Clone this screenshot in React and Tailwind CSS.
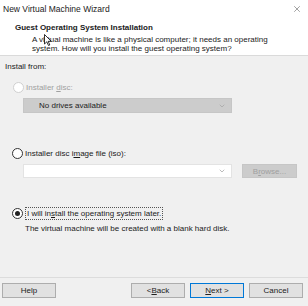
import { X, ChevronDown } from 'lucide-react';

function Radio({ checked, disabled }) {
  return (
    <span
      className={`flex h-[11px] w-[11px] shrink-0 items-center justify-center rounded-full border bg-white ${
        disabled ? 'border-[#d0d0d0]' : 'border-[#333]'
      }`}
    >
      {checked && <span className="h-[5px] w-[5px] rounded-full bg-[#222]" />}
    </span>
  );
}

function Button({ children, primary }) {
  return (
    <div
      className={`flex h-[15px] w-[54px] items-center justify-center border bg-[#e1e1e1] text-[#222] ${
        primary ? 'border-[#0078d7]' : 'border-[#adadad]'
      }`}
    >
      {children}
    </div>
  );
}

export default function App() {
  return (
    <div className="relative flex h-[306px] w-[308px] flex-col overflow-hidden bg-[#f0f0f0] font-['Liberation_Sans',Arial,sans-serif] text-[8px] leading-[9px] text-[#1a1a1a]">
      <div className="h-[56px] shrink-0 border-b border-[#dadada] bg-white">
        <div className="flex h-[18px] items-center justify-between pl-[3px] pr-[6px]">
          <span className="text-[8.5px] text-[#222]">New Virtual Machine Wizard</span>
          <X size={10} strokeWidth={1.2} className="text-[#444]" />
        </div>
        <div className="whitespace-nowrap pl-[15px] pt-[5px] font-bold">Guest Operating System Installation</div>
        <div className="whitespace-nowrap pl-[32px] pt-[3px] text-[#222]">
          A virtual machine is like a physical computer; it needs an operating
          <br />
          system. How will you install the guest operating system?
        </div>
      </div>

      <div className="flex flex-1 flex-col px-[5px]">
        <div className="mt-[6px]">Install from:</div>

        <div className="mt-[11px] flex items-center gap-[2px] pl-[8px] text-[#a0a0a0]">
          <Radio disabled />
          <span>
            Installer <span className="underline">d</span>isc:
          </span>
        </div>
        <div className="ml-[18px] mt-[5px] flex h-[15px] w-[209px] items-center justify-between border border-[#c6c6c6] bg-[#cccccc] pl-[15px] pr-[5px]">
          <span className="text-[#222]">No drives available</span>
          <ChevronDown size={8} className="text-[#a0a0a0]" />
        </div>

        <div className="mt-[35px] flex items-center gap-[2px] pl-[7px]">
          <Radio />
          <span>
            Installer disc i<span className="underline">m</span>age file (iso):
          </span>
        </div>
        <div className="mt-[5px] flex items-center gap-[10px] pl-[18px]">
          <div className="flex h-[14px] w-[209px] items-center justify-end border border-[#e3e3e3] bg-white pr-[5px]">
            <ChevronDown size={8} className="text-[#9a9a9a]" />
          </div>
          <div className="flex h-[14px] w-[55px] items-center justify-center border border-[#c6c6c6] bg-[#cccccc] text-[#a0a0a0]">
            <span>
              B<span className="underline">r</span>owse...
            </span>
          </div>
        </div>

        <div className="mt-[29px] flex items-center gap-[2px] pl-[7px]">
          <Radio checked />
          <span className="border border-dotted border-[#555] px-[1px] py-[1px]">
            I will in<span className="underline">s</span>tall the operating system later.
          </span>
        </div>
        <div className="mt-[4px] pl-[20px] text-[#222]">
          The virtual machine will be created with a blank hard disk.
        </div>
      </div>

      <div className="flex h-[29px] shrink-0 items-start border-t border-[#dcdcdc] pl-[2px] pr-[5px] pt-[5px]">
        <Button>Help</Button>
        <div className="flex-1" />
        <div className="flex gap-[5px]">
          <Button>
            &lt; <span className="underline">B</span>ack
          </Button>
          <Button primary>
            <span className="underline">N</span>ext &gt;
          </Button>
          <Button>Cancel</Button>
        </div>
      </div>

      <svg className="absolute left-[44px] top-[34px]" width="8" height="12" viewBox="0 0 8 12">
        <path d="M0.5 0.5 L0.5 10 L2.8 7.8 L4.5 11.5 L5.8 11 L4.2 7.3 L7.3 7.3 Z" fill="white" stroke="black" strokeWidth="0.8" />
      </svg>
    </div>
  );
}
